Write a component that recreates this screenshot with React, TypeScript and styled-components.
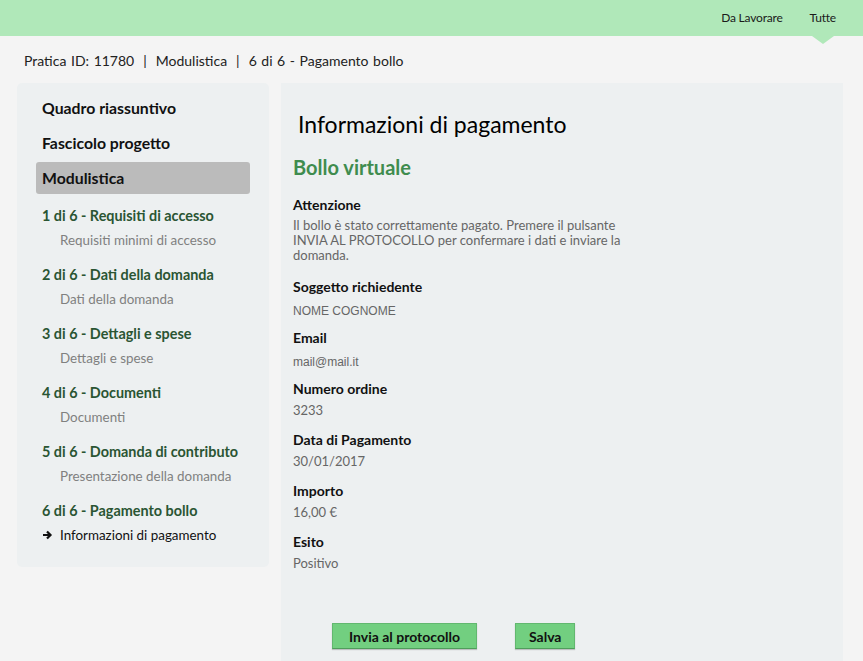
import styled, { createGlobalStyle } from 'styled-components'

const Global = createGlobalStyle`
  body {
    margin: 0;
    background: #f4f4f4;
    font-family: Lato, "Open Sans", sans-serif;
    color: #111;
  }
`

const Header = styled.header`
  height: 36px;
  background: #b0e8b9;
  display: flex;
  justify-content: flex-end;
  align-items: center;
  gap: 27px;
  padding-right: 27px;
`

const NavLink = styled.span<{ $active?: boolean }>`
  position: relative;
  font-size: 12px;
  letter-spacing: -0.2px;
  color: #1a1a1a;
  line-height: 36px;

  ${({ $active }) =>
    $active &&
    `
    &::after {
      content: '';
      position: absolute;
      left: 50%;
      bottom: -8px;
      transform: translateX(-50%);
      border-left: 11px solid transparent;
      border-right: 11px solid transparent;
      border-top: 8px solid #b0e8b9;
    }
  `}
`

const Breadcrumb = styled.div`
  padding: 16px 24px 13px;
  font-size: 14px;
  line-height: 18px;
  color: #222;
  word-spacing: 1px;
`

const Sep = styled.span`
  margin: 0 9px;
`

const Layout = styled.div`
  display: grid;
  grid-template-columns: 252px 562px;
  gap: 12px;
  padding-left: 17px;
  align-items: start;
`

const Sidebar = styled.nav`
  background: #edf0f1;
  border-radius: 5px;
  padding: 9px 19px 22px;
  display: flex;
  flex-direction: column;
`

const MenuItem = styled.div<{ $selected?: boolean }>`
  font-size: 15.8px;
  font-weight: 700;
  line-height: 32px;
  padding-left: 6px;
  margin-bottom: 3px;
  border-radius: 3px;
  background: ${({ $selected }) => ($selected ? '#bbbbbb' : 'transparent')};
`

const Steps = styled.div`
  margin-top: 9px;
  display: flex;
  flex-direction: column;
  gap: 15px;
  padding-left: 6px;
`

const Step = styled.div`
  display: flex;
  flex-direction: column;
  gap: 4px;
`

const StepTitle = styled.div`
  font-size: 14.4px;
  font-weight: 700;
  line-height: 20px;
  color: #2a5533;
`

const StepSub = styled.div<{ $current?: boolean }>`
  display: flex;
  align-items: center;
  gap: 7px;
  font-size: 13.4px;
  line-height: 20px;
  padding-left: ${({ $current }) => ($current ? '0' : '18px')};
  color: ${({ $current }) => ($current ? '#111' : '#808080')};
`

const Main = styled.main`
  background: #edf0f1;
  min-height: 600px;
  padding: 27px 12px 0;
  display: flex;
  flex-direction: column;
`

const Title = styled.h1`
  margin: 0 0 17px 5px;
  font-size: 23px;
  font-weight: 400;
  line-height: 28px;
  color: #000;
`

const SubTitle = styled.h2`
  margin: 0 0 16px;
  font-size: 20px;
  font-weight: 700;
  line-height: 24px;
  color: #3f8c4e;
`

const Label = styled.div`
  font-size: 14px;
  font-weight: 700;
  line-height: 20px;
  color: #111;
`

const Notice = styled.p`
  margin: 3px 0 14px;
  max-width: 350px;
  font-size: 13px;
  line-height: 15px;
  color: #666;
`

const Fields = styled.div`
  display: flex;
  flex-direction: column;
  gap: 7px;
`

const Field = styled.div`
  display: flex;
  flex-direction: column;
  gap: 4px;
`

const Value = styled.div<{ $arial?: boolean }>`
  font-size: ${({ $arial }) => ($arial ? '12px' : '13px')};
  font-family: ${({ $arial }) => ($arial ? '"Liberation Sans", Arial, sans-serif' : 'inherit')};
  line-height: 20px;
  margin: ${({ $arial }) => ($arial ? '0' : '-3px 0 3px')};
  color: #666;
`

const Actions = styled.div`
  display: flex;
  gap: 38px;
  margin: 47px 0 0 39px;
`

const Button = styled.button<{ $pad?: number }>`
  height: 26px;
  padding: 0 ${({ $pad }) => $pad ?? 16}px;
  background: #72cf80;
  border: 1px solid #62b86f;
  border-bottom-color: #4f9d5b;
  box-shadow: 0 1px 1px rgba(0, 0, 0, 0.2);
  font-family: inherit;
  font-size: 14px;
  font-weight: 700;
  color: #111;
  cursor: pointer;
`

const steps = [
  { title: '1 di 6 - Requisiti di accesso', sub: 'Requisiti minimi di accesso' },
  { title: '2 di 6 - Dati della domanda', sub: 'Dati della domanda' },
  { title: '3 di 6 - Dettagli e spese', sub: 'Dettagli e spese' },
  { title: '4 di 6 - Documenti', sub: 'Documenti' },
  { title: '5 di 6 - Domanda di contributo', sub: 'Presentazione della domanda' },
]

const fields = [
  { label: 'Soggetto richiedente', value: 'NOME COGNOME', arial: true },
  { label: 'Email', value: 'mail@mail.it', arial: true },
  { label: 'Numero ordine', value: '3233' },
  { label: 'Data di Pagamento', value: '30/01/2017' },
  { label: 'Importo', value: '16,00 €' },
  { label: 'Esito', value: 'Positivo' },
]

const Arrow = () => (
  <svg width="11" height="10" viewBox="0 0 11 10">
    <path d="M1 5h7M5 1.5 8.5 5 5 8.5" stroke="#111" strokeWidth="2.2" fill="none" />
  </svg>
)

const App = () => {
  return (
    <>
      <Global />
      <Header>
        <NavLink>Da Lavorare</NavLink>
        <NavLink $active>Tutte</NavLink>
      </Header>

      <Breadcrumb>
        Pratica ID: 11780<Sep>|</Sep>Modulistica<Sep>|</Sep>6 di 6 - Pagamento bollo
      </Breadcrumb>

      <Layout>
        <Sidebar>
          <MenuItem>Quadro riassuntivo</MenuItem>
          <MenuItem>Fascicolo progetto</MenuItem>
          <MenuItem $selected>Modulistica</MenuItem>
          <Steps>
            {steps.map((s) => (
              <Step key={s.title}>
                <StepTitle>{s.title}</StepTitle>
                <StepSub>{s.sub}</StepSub>
              </Step>
            ))}
            <Step>
              <StepTitle>6 di 6 - Pagamento bollo</StepTitle>
              <StepSub $current>
                <Arrow />
                Informazioni di pagamento
              </StepSub>
            </Step>
          </Steps>
        </Sidebar>

        <Main>
          <Title>Informazioni di pagamento</Title>
          <SubTitle>Bollo virtuale</SubTitle>
          <Label>Attenzione</Label>
          <Notice>
            Il bollo è stato correttamente pagato. Premere il pulsante INVIA AL PROTOCOLLO per
            confermare i dati e inviare la domanda.
          </Notice>
          <Fields>
            {fields.map((f) => (
              <Field key={f.label}>
                <Label>{f.label}</Label>
                <Value $arial={f.arial}>{f.value}</Value>
              </Field>
            ))}
          </Fields>
          <Actions>
            <Button>Invia al protocollo</Button>
            <Button $pad={13}>Salva</Button>
          </Actions>
        </Main>
      </Layout>
    </>
  )
}

export default App
